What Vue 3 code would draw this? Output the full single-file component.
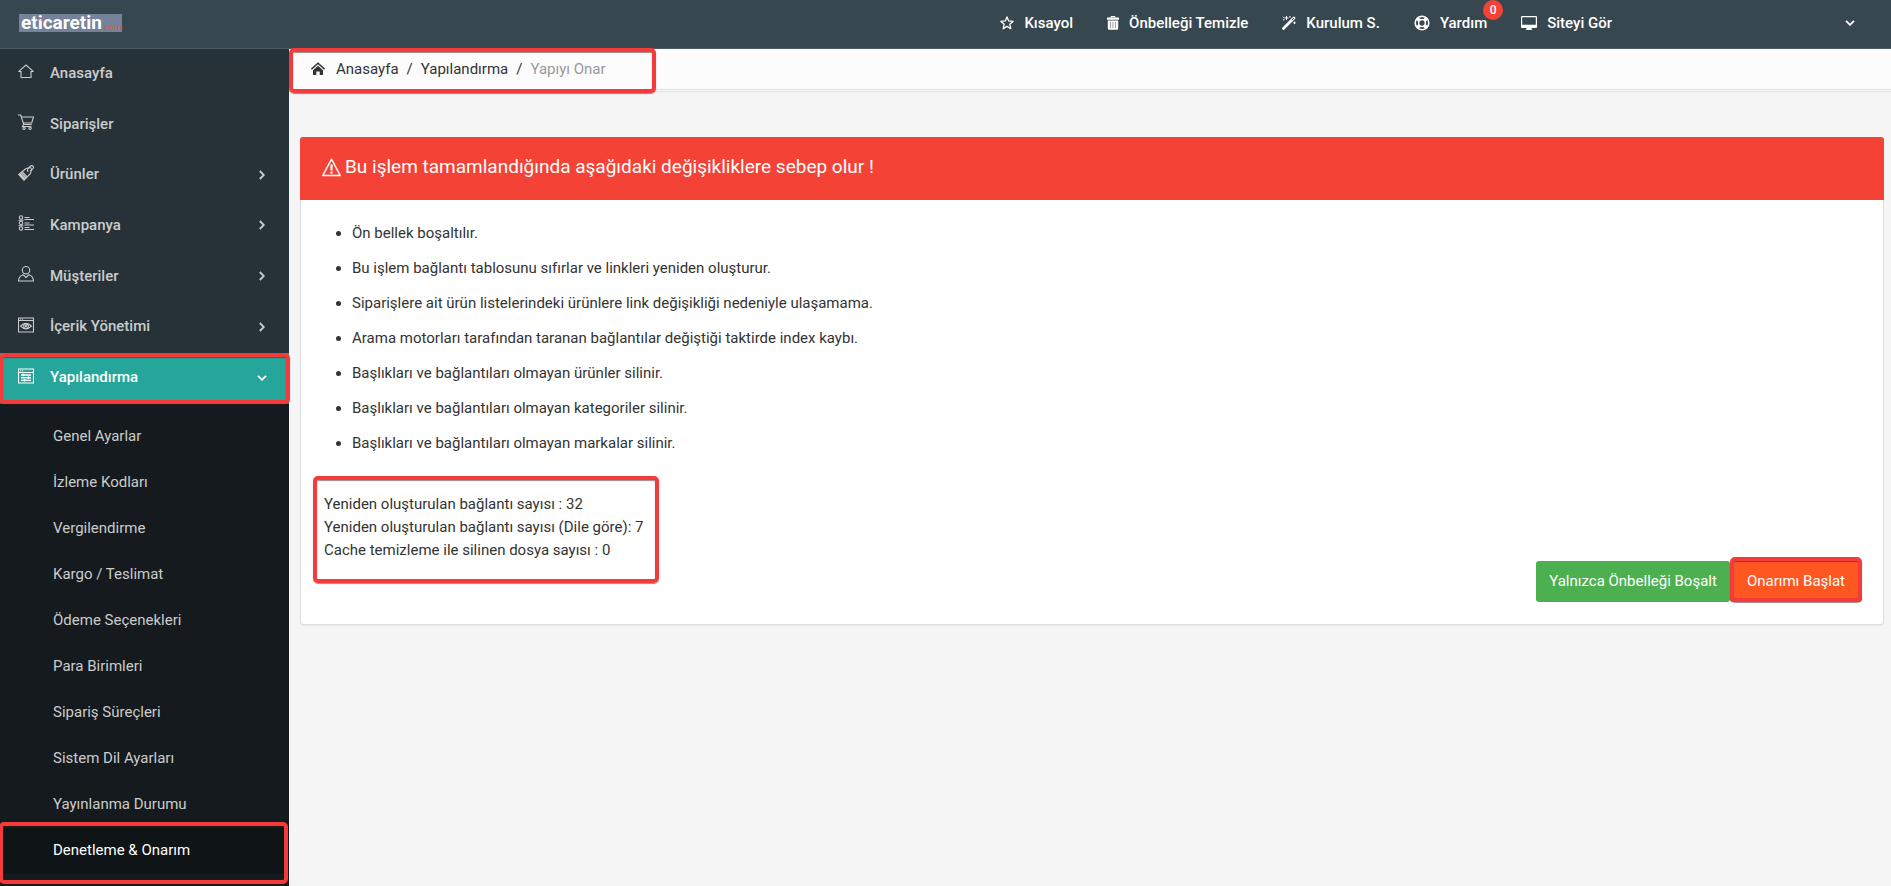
<script setup>
const topLinks = [
  { label: 'Kısayol', icon: 'star' },
  { label: 'Önbelleği Temizle', icon: 'trash' },
  { label: 'Kurulum S.', icon: 'wand' },
  { label: 'Yardım', icon: 'help', badge: 0 },
  { label: 'Siteyi Gör', icon: 'monitor' },
]

const menu = [
  { label: 'Anasayfa', icon: 'home' },
  { label: 'Siparişler', icon: 'cart' },
  { label: 'Ürünler', icon: 'tag', children: true },
  { label: 'Kampanya', icon: 'list', children: true },
  { label: 'Müşteriler', icon: 'user', children: true },
  { label: 'İçerik Yönetimi', icon: 'eye', children: true },
  { label: 'Yapılandırma', icon: 'config', children: true, active: true },
]

const subMenu = [
  'Genel Ayarlar',
  'İzleme Kodları',
  'Vergilendirme',
  'Kargo / Teslimat',
  'Ödeme Seçenekleri',
  'Para Birimleri',
  'Sipariş Süreçleri',
  'Sistem Dil Ayarları',
  'Yayınlanma Durumu',
  'Denetleme & Onarım',
]
const activeSub = 'Denetleme & Onarım'

const effects = [
  'Ön bellek boşaltılır.',
  'Bu işlem bağlantı tablosunu sıfırlar ve linkleri yeniden oluşturur.',
  'Siparişlere ait ürün listelerindeki ürünlere link değişikliği nedeniyle ulaşamama.',
  'Arama motorları tarafından taranan bağlantılar değiştiği taktirde index kaybı.',
  'Başlıkları ve bağlantıları olmayan ürünler silinir.',
  'Başlıkları ve bağlantıları olmayan kategoriler silinir.',
  'Başlıkları ve bağlantıları olmayan markalar silinir.',
]

const results = [
  'Yeniden oluşturulan bağlantı sayısı : 32',
  'Yeniden oluşturulan bağlantı sayısı (Dile göre): 7',
  'Cache temizleme ile silinen dosya sayısı : 0',
]
</script>

<template>
  <div class="app">
    <header class="topbar">
      <a href="#" class="logo">
        <span class="logo-name">eticaretin</span><span class="logo-tld">.com</span>
        <span class="logo-my">my</span>
      </a>
      <nav class="top-nav">
        <a v-for="l in topLinks" :key="l.label" href="#" class="top-link">
          <svg v-if="l.icon === 'star'" class="ico w14" viewBox="0 0 14 14" fill="none" stroke="currentColor" stroke-width="1.3" stroke-linejoin="round">
            <path d="M7 .9l1.700 4 4.500.4-3.400 2.900 1 4.600L7 10.400l-3.800 2.400 1-4.600L.8 5.300l4.500-.4z" />
          </svg>
          <svg v-else-if="l.icon === 'trash'" class="ico w12" viewBox="0 0 12 14" fill="currentColor">
            <path d="M4 0h4l.6 1.500H12v2.200H0V1.500h3.400zM4.600.9l-.2.600h3.200l-.2-.6z" />
            <path fill-rule="evenodd" d="M.8 4.400h10.400V12.500q0 1.200-1.200 1.200H2Q.8 13.700.8 12.500zM3 6v6h.5V6zm2.700 0v6h.5V6zm2.800 0v6h.5V6z" />
          </svg>
          <svg v-else-if="l.icon === 'wand'" class="ico w14" viewBox="0 0 14 14" fill="none" stroke="currentColor">
            <path d="M1.500 12.500L8.400 5.600" stroke-width="2.800" stroke-linecap="round" />
            <path d="M9.200 4.800L12 2" stroke-width="2.800" stroke-linecap="round" />
            <path d="M9.800 4.200L12 2" stroke="#37474f" stroke-width="1" />
            <path d="M4.500 0v3.800M2.600 1.900h3.800M8 0v1.800M12.500 5.500v2.600M11.200 6.800h2.600M1 .8l1.200 1.200M1 3.800h1.600" stroke-width="1" />
          </svg>
          <svg v-else-if="l.icon === 'help'" class="ico w16" viewBox="0 0 16 16" fill="none" stroke="currentColor">
            <circle cx="8" cy="8" r="6.800" stroke-width="1.600" />
            <circle cx="8" cy="8" r="3.400" stroke-width="1.500" />
            <path d="M3.200 3.200l2.600 2.600M12.800 3.200l-2.600 2.600M3.200 12.800l2.600-2.600M12.800 12.800l-2.600-2.600" stroke-width="3.400" />
          </svg>
          <svg v-else class="ico w16" viewBox="0 0 16 14" fill="currentColor">
            <path fill-rule="evenodd" d="M1 0h14q1 0 1 1v10q0 1-1 1h-4.500v1l1 1h-7l1-1v-1H1q-1 0-1-1V1q0-1 1-1zM1.200 1.200v7.600h13.600V1.200z" />
          </svg>
          <span>{{ l.label }}</span>
          <span v-if="l.badge !== undefined" class="badge">{{ l.badge }}</span>
        </a>
      </nav>
      <button class="account" type="button" aria-label="Hesap">
        <svg class="caret" viewBox="0 0 10 6" fill="none" stroke="currentColor" stroke-width="1.800"><path d="M1 .8l4 4 4-4" /></svg>
      </button>
    </header>

    <div class="layout">
      <aside class="sidebar">
        <nav class="menu">
          <a v-for="m in menu" :key="m.label" href="#" class="menu-item" :class="{ active: m.active, marked: m.active }">
            <svg class="menu-ico" viewBox="0 0 16 16" fill="none" stroke="currentColor" stroke-width="1.100">
              <path v-if="m.icon === 'home'" d="M.5 8.700L8 2l7.500 6.700M.5 8.500h2.500v6h10v-6h2.500" />
              <g v-else-if="m.icon === 'cart'">
                <path d="M0 1h2.700l3 9.500h8M3.200 3h12.300l-1.800 6H5.400" />
                <path d="M5.600 10.500L4.500 12.500h9" />
                <circle cx="6" cy="14.200" r="1.200" /><circle cx="12" cy="14.200" r="1.200" />
              </g>
              <g v-else-if="m.icon === 'tag'">
                <path d="M8 3.500l4.500-1 1 1.500-1 4.500L6 15.300.7 9.500z" />
                <path d="M2 9l5 5M3.200 8l5 5M4.400 7l4.800 4.800M1.300 9.700l4.500 4.500" />
                <path d="M10.300 6.800q-1.800-1.300.2-3.600l1.800-2q1.600-1.300 2.800 0 1 1.300-.3 2.600l-2.600 2.400" />
              </g>
              <g v-else-if="m.icon === 'list'">
                <circle cx="3" cy="2.500" r="1.700" /><circle cx="3" cy="8" r="1.700" /><circle cx="3" cy="13.500" r="1.700" />
                <path d="M.5 5.200h5M.5 10.700h5M6.500 2.500h5M6.500 4.500h9.500M6.500 8h5M6.500 10h9.500M6.500 12.500h5M6.500 14.500h9.500" />
              </g>
              <g v-else-if="m.icon === 'user'">
                <circle cx="8" cy="4.200" r="3.700" />
                <path d="M5 8.700Q.8 10 .5 15h15Q15.200 10 11 8.700L8 11.500z" />
              </g>
              <g v-else-if="m.icon === 'eye'">
                <path d="M.5 1h15v14H.5zM.5 3.500h15M2 2.300h1M4 2.300h1" />
                <path d="M2.500 9.200Q8 3.500 13.500 9.200 8 14.500 2.500 9.200z" />
                <circle cx="8" cy="9.200" r="2.300" /><circle cx="8" cy="9.200" r=".6" />
              </g>
              <g v-else>
                <path d="M.5 1h15v14H.5zM.5 4.500h15M2 2.700h1M4 2.700h1" />
                <path d="M3 7h10M3 9.700h10M3 12.400h10" stroke-width="1.400" />
                <path d="M5.500 5.800v2.400M10.500 8.500v2.400M6.500 11.200v2.400" stroke-width="1.600" />
              </g>
            </svg>
            <span class="menu-label">{{ m.label }}</span>
            <svg v-if="m.active" class="caret" viewBox="0 0 10 6" fill="none" stroke="currentColor" stroke-width="1.800"><path d="M1 .8l4 4 4-4" /></svg>
            <svg v-else-if="m.children" class="chev" viewBox="0 0 6 10" fill="none" stroke="currentColor" stroke-width="1.800"><path d="M.8 1l4 4-4 4" /></svg>
          </a>
        </nav>
        <nav class="submenu">
          <a v-for="s in subMenu" :key="s" href="#" class="sub-item" :class="{ current: s === activeSub, marked: s === activeSub }">{{ s }}</a>
        </nav>
      </aside>

      <main class="main">
        <div class="crumb-bar">
          <nav class="crumbs marked">
            <a href="#" class="crumb">
              <svg class="crumb-ico" viewBox="0 0 14 13" fill="currentColor">
                <path d="M7 3.700l5 4.500V13H8.700V9.500H5.300V13H2V8.200z" />
                <path d="M.4 7.200L7 1.200l6.600 6" fill="none" stroke="currentColor" stroke-width="1.500" />
              </svg>
              Anasayfa
            </a>
            <span class="sep">/</span>
            <a href="#" class="crumb">Yapılandırma</a>
            <span class="sep">/</span>
            <span class="crumb-now">Yapıyı Onar</span>
          </nav>
        </div>

        <section class="panel">
          <h1 class="panel-head">
            <svg class="warn" viewBox="0 0 19 19" fill="none" stroke="currentColor" stroke-linejoin="round">
              <path d="M9.500 1.200L18.200 17.500H.8z" stroke-width="1.500" />
              <path d="M9.500 6.500v6" stroke-width="2.200" />
              <path d="M9.500 13.600v2" stroke-width="2.200" />
            </svg>
            Bu işlem tamamlandığında aşağıdaki değişikliklere sebep olur !
          </h1>
          <div class="panel-body">
            <ul class="effects">
              <li v-for="e in effects" :key="e">{{ e }}</li>
            </ul>
            <div class="results marked">
              <div v-for="r in results" :key="r">{{ r }}</div>
            </div>
            <div class="actions">
              <button type="button" class="btn green">Yalnızca Önbelleği Boşalt</button>
              <button type="button" class="btn orange marked">Onarımı Başlat</button>
            </div>
          </div>
        </section>
      </main>
    </div>
  </div>
</template>

<style>
body {
  margin: 0;
  background: #f5f5f5;
}
</style>

<style scoped>
.app {
  display: flex;
  flex-direction: column;
  min-height: 100vh;
  font: 400 15px/23px Roboto, "Noto Sans", sans-serif;
  color: #333;
}
.app * {
  box-sizing: border-box;
}
a {
  color: inherit;
  text-decoration: none;
}
svg {
  flex: none;
  display: block;
}

.topbar {
  display: flex;
  align-items: center;
  height: 49px;
  padding-bottom: 2px;
  background: #37474f;
  border-bottom: 1px solid #4b5a61;
  color: #fff;
}
.logo {
  position: relative;
  display: flex;
  align-items: flex-end;
  width: 103px;
  height: 18px;
  margin-left: 19px;
  padding-left: 2px;
  background: #75829b;
  white-space: nowrap;
}
.logo-name {
  font-size: 19px;
  font-weight: 700;
  line-height: 19px;
}
.logo-tld {
  font-size: 9px;
  line-height: 9px;
  color: #e2572b;
}
.logo-my {
  position: absolute;
  left: 16px;
  top: 1px;
  font-size: 6px;
  line-height: 6px;
  color: #e2572b;
}
.top-nav {
  display: flex;
  gap: 34px;
  margin-left: auto;
}
.top-link {
  position: relative;
  display: flex;
  align-items: center;
  gap: 10px;
  font-weight: 500;
}
.w12 { width: 12px; height: 14px; }
.w14 { width: 14px; height: 14px; }
.w16 { width: 16px; height: 16px; }
.badge {
  position: absolute;
  top: -12px;
  right: -16px;
  width: 20px;
  height: 20px;
  border-radius: 50%;
  background: #f44336;
  font-size: 12px;
  line-height: 20px;
  text-align: center;
}
.account {
  display: flex;
  justify-content: flex-end;
  width: 279px;
  padding: 16px 36px 16px 0;
  border: 0;
  background: none;
  color: #fff;
}
.caret {
  width: 10px;
  height: 6px;
}
.chev {
  width: 6px;
  height: 10px;
  margin-right: 2px;
}

.layout {
  display: flex;
  flex: 1;
}
.sidebar {
  width: 289px;
  flex: none;
  background: #263238;
  color: #ccc;
}
.menu {
  display: grid;
  grid-auto-rows: 1fr;
  min-height: 355px;
}
.menu-item {
  position: relative;
  display: flex;
  align-items: center;
  padding: 0 22px 2px 18px;
  font-weight: 500;
}
.menu-ico {
  width: 16px;
  height: 16px;
  margin-right: 16px;
  margin-bottom: 4px;
}
.menu-label {
  flex: 1;
}
.menu-item.active {
  background: #26a69a;
  color: #fff;
}
.submenu {
  padding: 10px 0 12px;
  background: #141a1d;
}
.sub-item {
  position: relative;
  display: block;
  padding: 11px 20px 12px 53px;
}
.sub-item.current {
  background: #0f1416;
  color: #fff;
}

.marked {
  position: relative;
}
.marked::after {
  content: "";
  position: absolute;
  z-index: 2;
  border: 4px solid #f33b3b;
  border-radius: 5px;
  box-shadow: 0 1px 1px rgba(60, 20, 20, 0.5), inset 0 1px 1px rgba(60, 20, 20, 0.5);
  pointer-events: none;
}
.menu-item.marked::after {
  inset: 0 -1px 0 -1px;
}
.sub-item.marked::after {
  inset: -6px 1px -10px -1px;
}
.crumbs.marked::after {
  inset: -1px 0 -4px 0;
}
.results.marked::after {
  inset: -17px -13px -21px -11px;
}
.btn.marked::after {
  inset: -4px 0 0 0;
}

.main {
  flex: 1;
  min-width: 0;
}
.crumb-bar {
  display: flex;
  height: 43px;
  background: #fcfcfc;
  border-bottom: 3px double #ddd;
}
.crumbs {
  display: flex;
  align-items: center;
  width: 367px;
  padding-left: 22px;
}
.crumb {
  display: flex;
  align-items: center;
  gap: 11px;
}
.crumb-ico {
  width: 14px;
  height: 13px;
  margin-bottom: 2px;
}
.sep {
  padding: 0 8px;
}
.crumb-now {
  color: #999;
}

.panel {
  margin: 45px 7px 20px 11px;
  background: #fff;
  border: 1px solid #ddd;
  border-radius: 3px;
  box-shadow: 0 1px 1px rgba(0, 0, 0, 0.05);
}
.panel-head {
  display: flex;
  align-items: center;
  gap: 4px;
  margin: -1px -1px 0;
  padding: 18px 22px 21px;
  border-radius: 3px 3px 0 0;
  background: #f44336;
  color: #fff;
  font-size: 19px;
  font-weight: 400;
  line-height: 24px;
}
.warn {
  width: 19px;
  height: 19px;
}
.panel-body {
  padding: 22px 21px 22px 23px;
}
.effects {
  display: flex;
  flex-direction: column;
  gap: 12px;
  margin: 0 0 38px;
  padding-left: 28px;
}
.results {
  width: fit-content;
  min-width: 322px;
}
.actions {
  display: flex;
  justify-content: flex-end;
  margin-top: -1px;
}
.btn {
  padding: 9px 13px;
  border: 0;
  border-radius: 3px;
  color: #fff;
  font: inherit;
}
.green {
  background: #4caf50;
}
.orange {
  padding: 9px 17px;
  background: #ff5722;
}
</style>
